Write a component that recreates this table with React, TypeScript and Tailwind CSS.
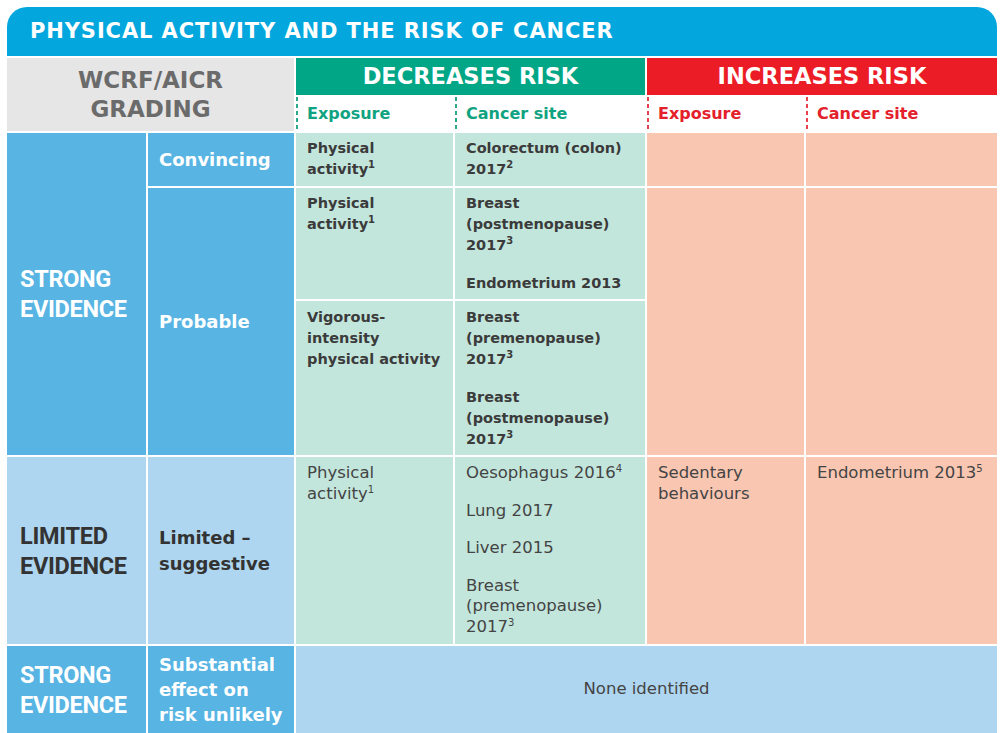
import React from "react";

const bold = "font-['DejaVu_Sans',sans-serif] font-bold";
const regular = "font-['DejaVu_Sans',sans-serif] font-normal";
const narrow = "font-['Roboto','Liberation_Sans',sans-serif] font-bold tracking-[-0.3px]";

const Sup = ({ n }: { n: string }) => <sup className="text-[10px] -top-[6px]">{n}</sup>;

const App = () => {
    return (
        <div className="w-[1006px] h-[733px] bg-white overflow-hidden pt-[7px] pl-[7px]">
            <div className="w-[990px]">
                <div className={`h-[49px] mb-[2px] rounded-t-[20px] bg-[#03a7dd] flex items-center pl-[23px] text-white text-[21px] tracking-[0.9px] ${bold}`}>
                    PHYSICAL ACTIVITY AND THE RISK OF CANCER
                </div>

                <div className="grid grid-cols-[139px_146px_157px_190px_157px_191px] grid-rows-[37px_34px_53px_111px_154px_187px_87px] gap-[2px] bg-white">
                    {/* header */}
                    <div className={`col-span-2 row-span-2 bg-[#e6e6e6] flex items-center justify-center text-center text-[#6b6b6b] text-[23px] leading-[29px] ${bold}`}>
                        WCRF/AICR<br />GRADING
                    </div>
                    <div className={`col-span-2 bg-[#00a685] flex items-center justify-center text-white text-[22.5px] ${bold}`}>
                        DECREASES RISK
                    </div>
                    <div className={`col-span-2 bg-[#ec1c26] flex items-center justify-center text-white text-[22.5px] ${bold}`}>
                        INCREASES RISK
                    </div>

                    <div className={`flex items-center text-[#10a381] text-[16px] ${bold}`}>
                        <span className="w-[2px] h-full bg-[repeating-linear-gradient(to_bottom,#2aa98a_0_4px,transparent_4px_7px)]" />
                        <span className="pl-[9px]">Exposure</span>
                    </div>
                    <div className={`flex items-center text-[#10a381] text-[16px] ${bold}`}>
                        <span className="w-[2px] h-full bg-[repeating-linear-gradient(to_bottom,#2aa98a_0_4px,transparent_4px_7px)]" />
                        <span className="pl-[9px]">Cancer site</span>
                    </div>
                    <div className={`flex items-center text-[#e4202b] text-[16px] ${bold}`}>
                        <span className="w-[2px] h-full bg-[repeating-linear-gradient(to_bottom,#e8424a_0_4px,transparent_4px_7px)]" />
                        <span className="pl-[9px]">Exposure</span>
                    </div>
                    <div className={`flex items-center text-[#e4202b] text-[16px] ${bold}`}>
                        <span className="w-[2px] h-full bg-[repeating-linear-gradient(to_bottom,#e8424a_0_4px,transparent_4px_7px)]" />
                        <span className="pl-[9px]">Cancer site</span>
                    </div>

                    {/* strong evidence */}
                    <div className={`row-span-3 bg-[#57b4e3] flex items-center pl-[13px] text-white text-[23.5px] leading-[30px] ${narrow}`}>
                        STRONG<br />EVIDENCE
                    </div>
                    <div className={`bg-[#57b4e3] flex items-center pl-[11px] text-white text-[18px] ${bold}`}>
                        Convincing
                    </div>
                    <div className={`bg-[#c3e6dc] pl-[11px] pt-[5px] text-[#3b3b3b] text-[14.5px] leading-[21px] ${bold}`}>
                        Physical<br />activity<Sup n="1" />
                    </div>
                    <div className={`bg-[#c3e6dc] pl-[11px] pt-[5px] text-[#3b3b3b] text-[14.5px] leading-[21px] ${bold}`}>
                        Colorectum (colon)<br />2017<Sup n="2" />
                    </div>
                    <div className="bg-[#f9c6b1]" />
                    <div className="bg-[#f9c6b1]" />

                    <div className={`row-span-2 bg-[#57b4e3] flex items-center pl-[11px] text-white text-[18px] ${bold}`}>
                        Probable
                    </div>
                    <div className={`bg-[#c3e6dc] pl-[11px] pt-[5px] text-[#3b3b3b] text-[14.5px] leading-[21px] ${bold}`}>
                        Physical<br />activity<Sup n="1" />
                    </div>
                    <div className={`bg-[#c3e6dc] pl-[11px] pt-[5px] text-[#3b3b3b] text-[14.5px] leading-[21px] flex flex-col gap-[17px] ${bold}`}>
                        <p>Breast<br />(postmenopause)<br />2017<Sup n="3" /></p>
                        <p>Endometrium 2013</p>
                    </div>
                    <div className="row-span-2 bg-[#f9c6b1]" />
                    <div className="row-span-2 bg-[#f9c6b1]" />

                    <div className={`bg-[#c3e6dc] pl-[11px] pt-[6px] text-[#3b3b3b] text-[14.5px] leading-[21px] ${bold}`}>
                        Vigorous-<br />intensity<br />physical activity
                    </div>
                    <div className={`bg-[#c3e6dc] pl-[11px] pt-[6px] text-[#3b3b3b] text-[14.5px] leading-[21px] flex flex-col gap-[17px] ${bold}`}>
                        <p>Breast<br />(premenopause)<br />2017<Sup n="3" /></p>
                        <p>Breast<br />(postmenopause)<br />2017<Sup n="3" /></p>
                    </div>

                    {/* limited evidence */}
                    <div className={`bg-[#aed6f0] flex items-center pl-[13px] text-[#333333] text-[23.5px] leading-[30px] ${narrow}`}>
                        LIMITED<br />EVIDENCE
                    </div>
                    <div className={`bg-[#aed6f0] flex items-center pl-[11px] text-[#333333] text-[18px] leading-[26px] ${bold}`}>
                        Limited –<br />suggestive
                    </div>
                    <div className={`bg-[#c3e6dc] pl-[11px] pt-[6px] text-[#444444] text-[16.5px] leading-[20.5px] ${regular}`}>
                        Physical<br />activity<Sup n="1" />
                    </div>
                    <div className={`bg-[#c3e6dc] pl-[11px] pt-[6px] text-[#444444] text-[16.5px] leading-[20.5px] flex flex-col gap-[17px] ${regular}`}>
                        <p>Oesophagus 2016<Sup n="4" /></p>
                        <p>Lung 2017</p>
                        <p>Liver 2015</p>
                        <p>Breast<br />(premenopause)<br />2017<Sup n="3" /></p>
                    </div>
                    <div className={`bg-[#f9c6b1] pl-[11px] pt-[6px] text-[#444444] text-[16.5px] leading-[20.5px] ${regular}`}>
                        Sedentary<br />behaviours
                    </div>
                    <div className={`bg-[#f9c6b1] pl-[11px] pt-[6px] text-[#444444] text-[16.5px] leading-[20.5px] ${regular}`}>
                        Endometrium 2013<Sup n="5" />
                    </div>

                    {/* substantial effect */}
                    <div className={`bg-[#57b4e3] flex items-center pl-[13px] text-white text-[23.5px] leading-[30px] ${narrow}`}>
                        STRONG<br />EVIDENCE
                    </div>
                    <div className={`bg-[#57b4e3] flex items-center pl-[11px] text-white text-[18px] leading-[25px] ${bold}`}>
                        Substantial<br />effect on<br />risk unlikely
                    </div>
                    <div className={`col-span-4 bg-[#aed6f0] flex items-center justify-center text-[#444444] text-[16.5px] ${regular}`}>
                        None identified
                    </div>
                </div>
            </div>
        </div>
    );
}

export default App;
